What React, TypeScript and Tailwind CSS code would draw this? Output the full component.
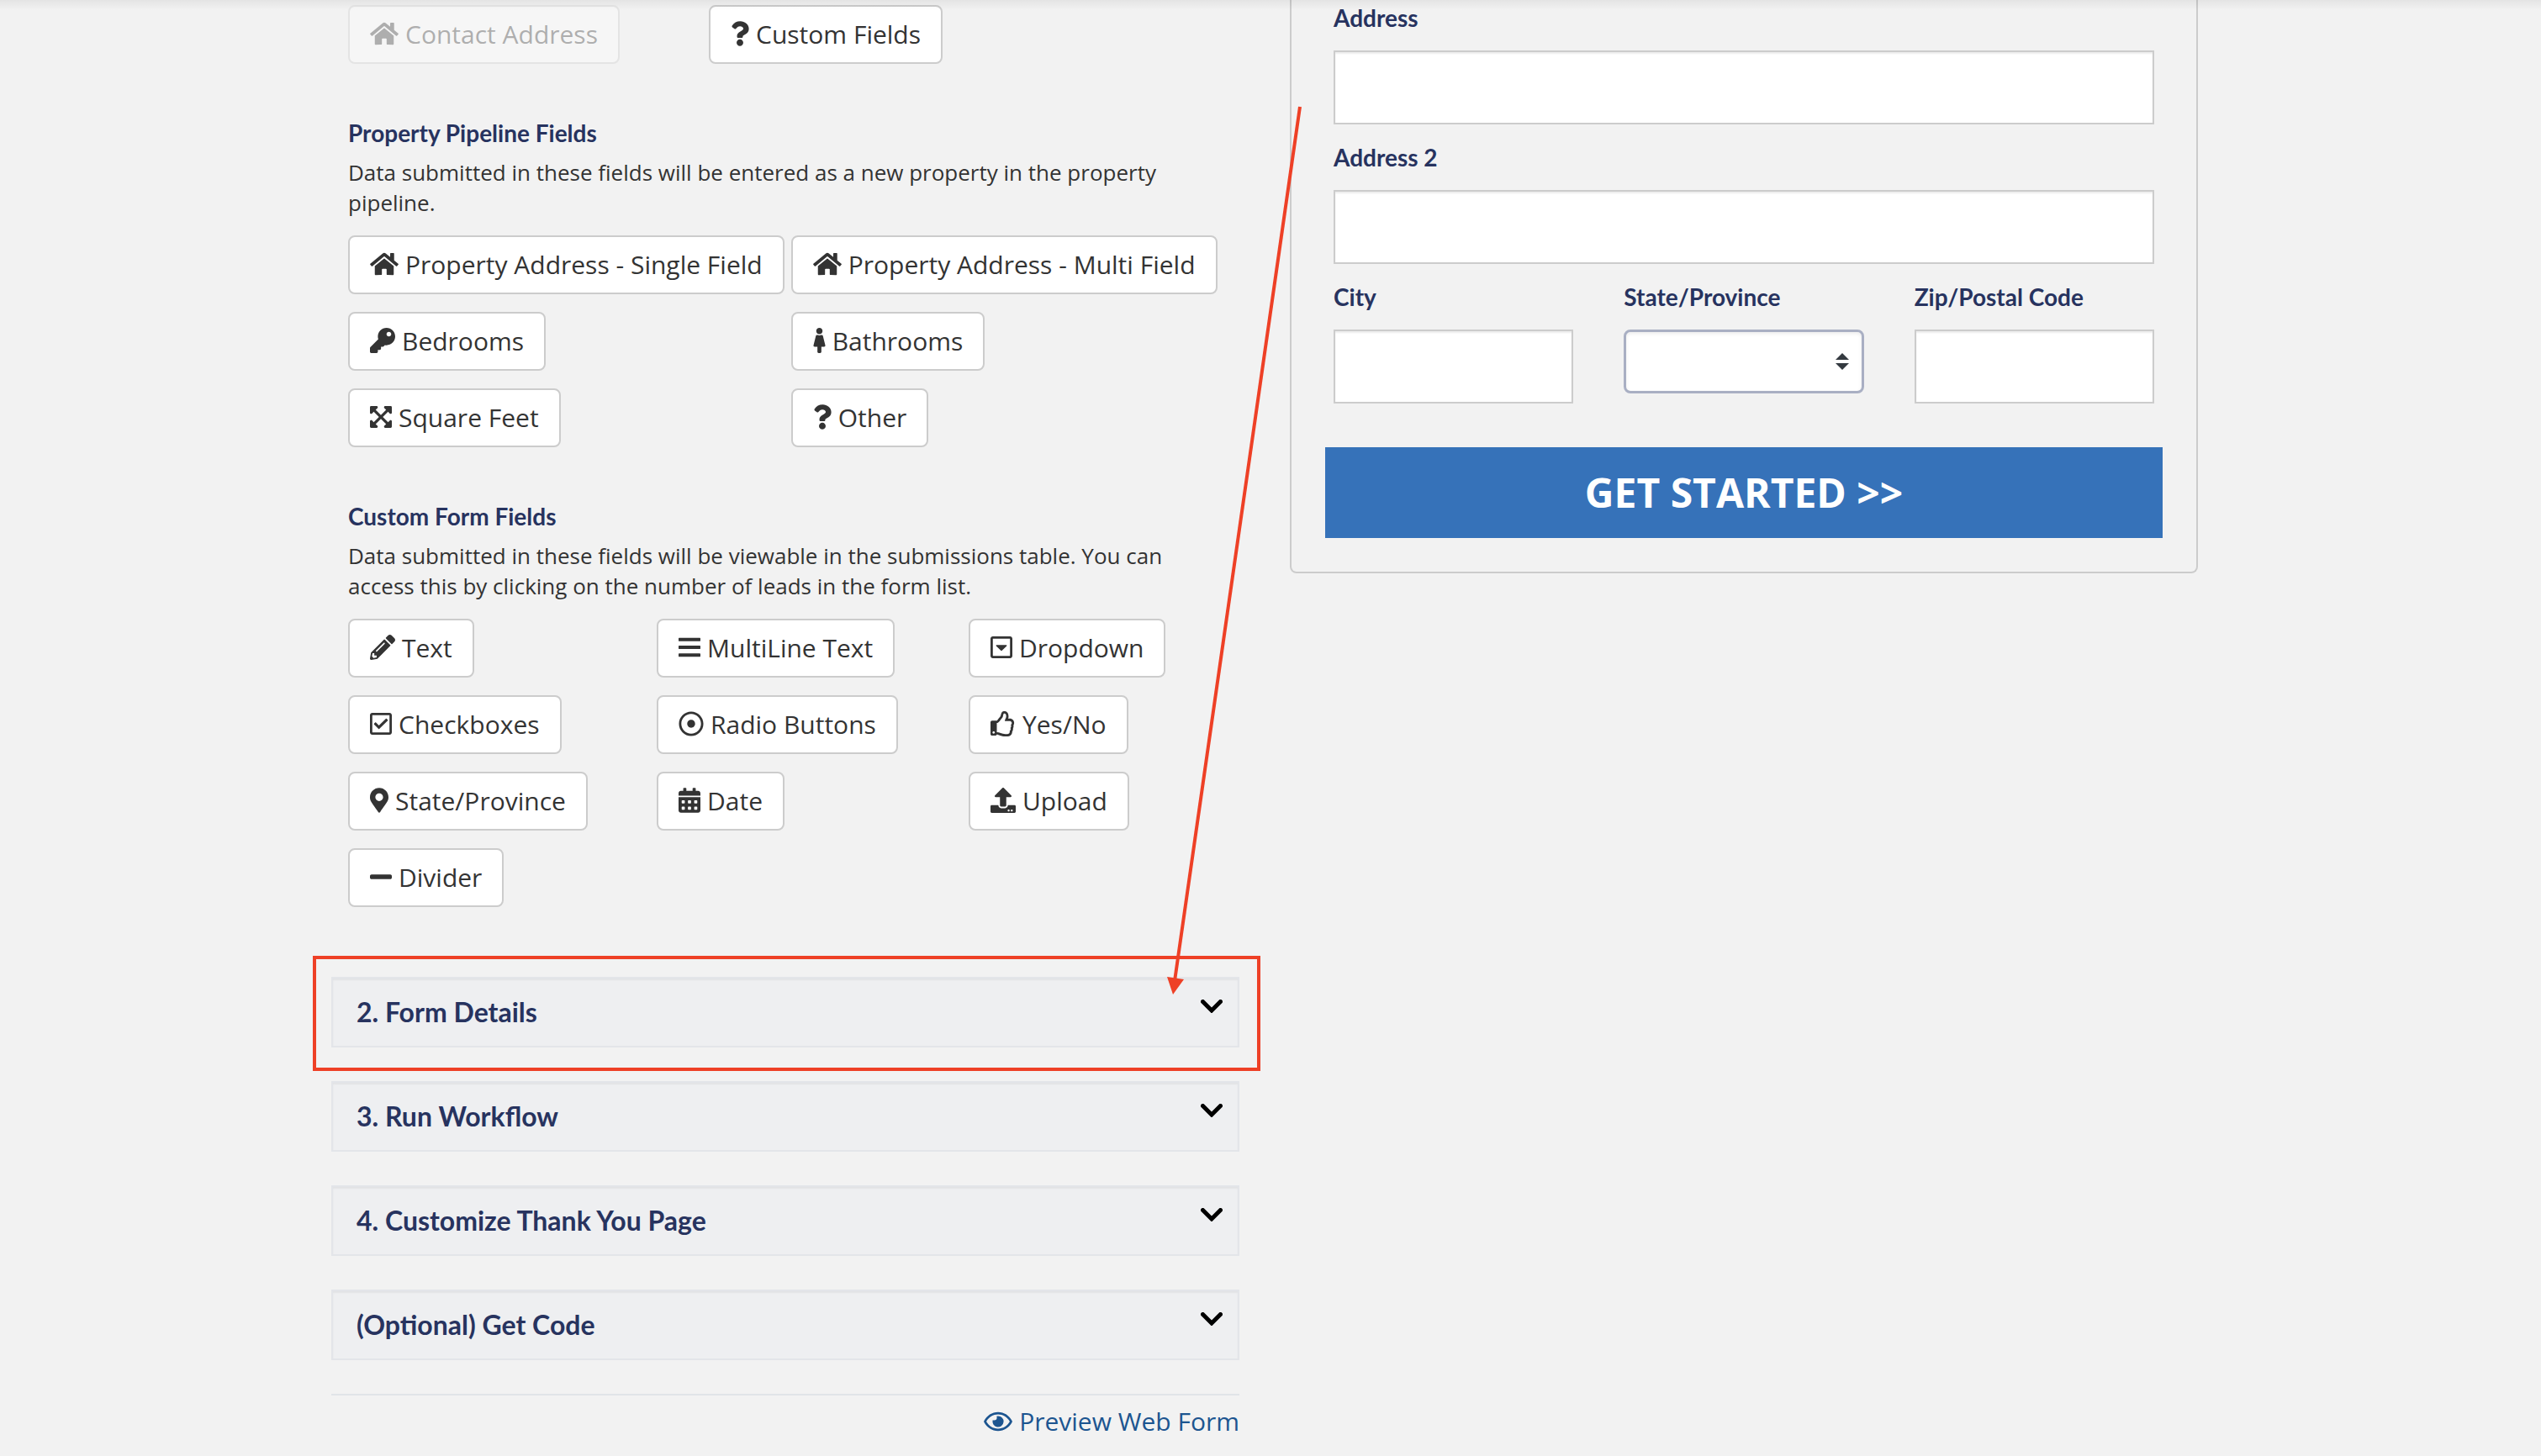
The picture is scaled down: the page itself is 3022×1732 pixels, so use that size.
import { useState } from "react";
import type { ReactNode } from "react";
import type { IconType } from "react-icons";
import {
    FaBars,
    FaCalendarAlt,
    FaExpandArrowsAlt,
    FaFemale,
    FaHome,
    FaKey,
    FaMapMarkerAlt,
    FaMinus,
    FaPencilAlt,
    FaQuestion,
    FaRegCaretSquareDown,
    FaRegCheckSquare,
    FaRegDotCircle,
    FaRegEye,
    FaRegThumbsUp,
    FaUpload,
} from "react-icons/fa";

type Field = { label: string; icon: IconType; iconWidth: string; disabled?: boolean };

const contactFields: Field[] = [
    { label: "Contact Address", icon: FaHome, iconWidth: "w-[34px]", disabled: true },
    { label: "Custom Fields", icon: FaQuestion, iconWidth: "w-[22px]" },
];

const propertyFields: Field[] = [
    { label: "Property Address - Single Field", icon: FaHome, iconWidth: "w-[34px]" },
    { label: "Property Address - Multi Field", icon: FaHome, iconWidth: "w-[34px]" },
    { label: "Bedrooms", icon: FaKey, iconWidth: "w-[30px]" },
    { label: "Bathrooms", icon: FaFemale, iconWidth: "w-[15px]" },
    { label: "Square Feet", icon: FaExpandArrowsAlt, iconWidth: "w-[26px]" },
    { label: "Other", icon: FaQuestion, iconWidth: "w-[22px]" },
];

const customFields: Field[] = [
    { label: "Text", icon: FaPencilAlt, iconWidth: "w-[30px]" },
    { label: "MultiLine Text", icon: FaBars, iconWidth: "w-[26px]" },
    { label: "Dropdown", icon: FaRegCaretSquareDown, iconWidth: "w-[26px]" },
    { label: "Checkboxes", icon: FaRegCheckSquare, iconWidth: "w-[26px]" },
    { label: "Radio Buttons", icon: FaRegDotCircle, iconWidth: "w-[30px]" },
    { label: "Yes/No", icon: FaRegThumbsUp, iconWidth: "w-[30px]" },
    { label: "State/Province", icon: FaMapMarkerAlt, iconWidth: "w-[22px]" },
    { label: "Date", icon: FaCalendarAlt, iconWidth: "w-[26px]" },
    { label: "Upload", icon: FaUpload, iconWidth: "w-[30px]" },
    { label: "Divider", icon: FaMinus, iconWidth: "w-[26px]" },
];

const steps = ["2. Form Details", "3. Run Workflow", "4. Customize Thank You Page", "(Optional) Get Code"];

function FieldButton({ label, icon: Icon, iconWidth, disabled }: Field) {
    return (
        <button
            type="button"
            disabled={disabled}
            className="flex h-[70px] items-center gap-2 justify-self-start whitespace-nowrap rounded-lg border-2 border-[#ccc] bg-white px-6 pb-0.5 text-[30px] text-[#333] disabled:opacity-35"
        >
            <Icon className={`h-[30px] shrink-0 ${iconWidth}`} />
            {label}
        </button>
    );
}

function FieldGroup({ title, description, children }: { title: string; description: string; children: ReactNode }) {
    return (
        <section className="mt-[65px] px-5">
            <h3 className="font-[Lato] text-[28px] leading-[34px] font-bold text-[#27335f]">{title}</h3>
            <p className="mt-3 mb-[21px] max-w-[1000px] text-[26px] leading-[36px] text-[#333]">{description}</p>
            {children}
        </section>
    );
}

function Chevron() {
    return (
        <svg viewBox="0 0 26 16" className="h-4 w-[26px]" fill="none" stroke="#000" strokeWidth="5" strokeLinecap="round">
            <path d="M2.5 2.5 13 13 23.5 2.5" />
        </svg>
    );
}

function Step({ title, highlighted }: { title: string; highlighted: boolean }) {
    return (
        <div className="relative">
            <button
                type="button"
                className="flex h-[84px] w-full items-start justify-between border-2 border-[#e3e5e9] bg-[#eeeff1] pt-[21px] pr-[18px] pl-7 font-[Lato] text-[32px] leading-[38px] font-bold text-[#27335f] shadow-[inset_0_2px_2px_rgba(0,0,0,0.05)]"
            >
                {title}
                <span className="pt-1">
                    <Chevron />
                </span>
            </button>
            {highlighted && (
                <div className="pointer-events-none absolute -top-[25px] -right-[25px] -bottom-7 -left-[22px] border-4 border-[#ee4026]">
                    {/* Arrow running down from the preview panel */}
                    <svg
                        viewBox="0 0 160 1060"
                        className="absolute right-[-55px] bottom-[88px] h-[1060px] w-[160px] overflow-visible"
                        fill="#ee4026"
                        stroke="none"
                    >
                        <path d="M156 5 7 1045" stroke="#ee4026" strokeWidth="4" />
                        <path d="M-2 1040 18 1043 5 1061Z" />
                    </svg>
                </div>
            )}
        </div>
    );
}

function TextField({ id, label }: { id: string; label: string }) {
    const [value, setValue] = useState("");
    return (
        <div>
            <FieldLabel id={id}>{label}</FieldLabel>
            <input
                id={id}
                type="text"
                value={value}
                onChange={(e) => setValue(e.target.value)}
                className="block h-[88px] w-full border-2 border-[#ccc] bg-white px-4 text-[30px] shadow-[inset_0_2px_2px_rgba(0,0,0,0.075)]"
            />
        </div>
    );
}

function FieldLabel({ id, children }: { id: string; children: ReactNode }) {
    return (
        <label htmlFor={id} className="mb-[22px] block font-[Lato] text-[28px] leading-[34px] font-bold text-[#27335f]">
            {children}
        </label>
    );
}

function PreviewPanel() {
    return (
        <form className="rounded-b-lg border-2 border-t-0 border-[#ccc] px-[50px] pt-1 pb-10">
            <div className="flex flex-col gap-[22px]">
                <TextField id="address" label="Address" />
                <TextField id="address2" label="Address 2" />
                <div className="grid grid-cols-3 gap-[60px]">
                    <TextField id="city" label="City" />
                    <div>
                        <FieldLabel id="state">State/Province</FieldLabel>
                        <div className="relative">
                            <select
                                id="state"
                                className="block h-[76px] w-full appearance-none rounded-lg border-3 border-[#a9afc3] bg-white px-4 text-[30px] shadow-[inset_0_2px_4px_rgba(0,0,0,0.075)]"
                            >
                                <option value=""></option>
                            </select>
                            <svg
                                viewBox="0 0 16 20"
                                className="pointer-events-none absolute top-7 right-[18px] h-5 w-4"
                                fill="#343a40"
                            >
                                <path d="M8 0 16 8H0ZM8 20 0 12H16Z" />
                            </svg>
                        </div>
                    </div>
                    <TextField id="zip" label="Zip/Postal Code" />
                </div>
            </div>
            <div className="-mx-[10px] mt-[52px]">
                <button type="button" className="block h-[108px] w-full bg-[#3672b9] text-[48px] font-bold text-white">
                    GET STARTED &gt;&gt;
                </button>
            </div>
        </form>
    );
}

export default function App() {
    return (
        <div className="min-h-screen overflow-hidden bg-[#f2f2f2] pr-[14px] font-['Open_Sans',sans-serif]">
            {/* Shadow cast by the bar above */}
            <div className="pointer-events-none absolute inset-x-0 top-0 h-3 bg-linear-to-b from-black/6 to-transparent" />
            <main className="mx-auto grid max-w-[2220px] grid-cols-2 items-start gap-[60px]">
                <div>
                    <div className="grid grid-cols-[429px_1fr] px-5 pt-[6px]">
                        {contactFields.map((field) => (
                            <FieldButton key={field.label} {...field} />
                        ))}
                    </div>

                    <FieldGroup
                        title="Property Pipeline Fields"
                        description="Data submitted in these fields will be entered as a new property in the property pipeline."
                    >
                        <div className="grid grid-cols-[max-content_max-content] gap-x-2 gap-y-[21px]">
                            {propertyFields.map((field) => (
                                <FieldButton key={field.label} {...field} />
                            ))}
                        </div>
                    </FieldGroup>

                    <FieldGroup
                        title="Custom Form Fields"
                        description="Data submitted in these fields will be viewable in the submissions table. You can access this by clicking on the number of leads in the form list."
                    >
                        <div className="grid grid-cols-[367px_371px_1fr] gap-y-[21px]">
                            {customFields.map((field) => (
                                <FieldButton key={field.label} {...field} />
                            ))}
                        </div>
                    </FieldGroup>

                    <div className="mt-[83px] flex flex-col gap-10">
                        {steps.map((title, idx) => (
                            <Step key={title} title={title} highlighted={idx === 0} />
                        ))}
                    </div>

                    <div className="mt-10 flex justify-end border-t-2 border-[#e1e4e8] pt-[11px]">
                        <a href="#preview" className="flex items-center gap-2 text-[30px] leading-10 text-[#1c5590]">
                            <FaRegEye className="h-[30px] w-[34px]" />
                            Preview Web Form
                        </a>
                    </div>
                </div>

                <PreviewPanel />
            </main>
        </div>
    );
}
